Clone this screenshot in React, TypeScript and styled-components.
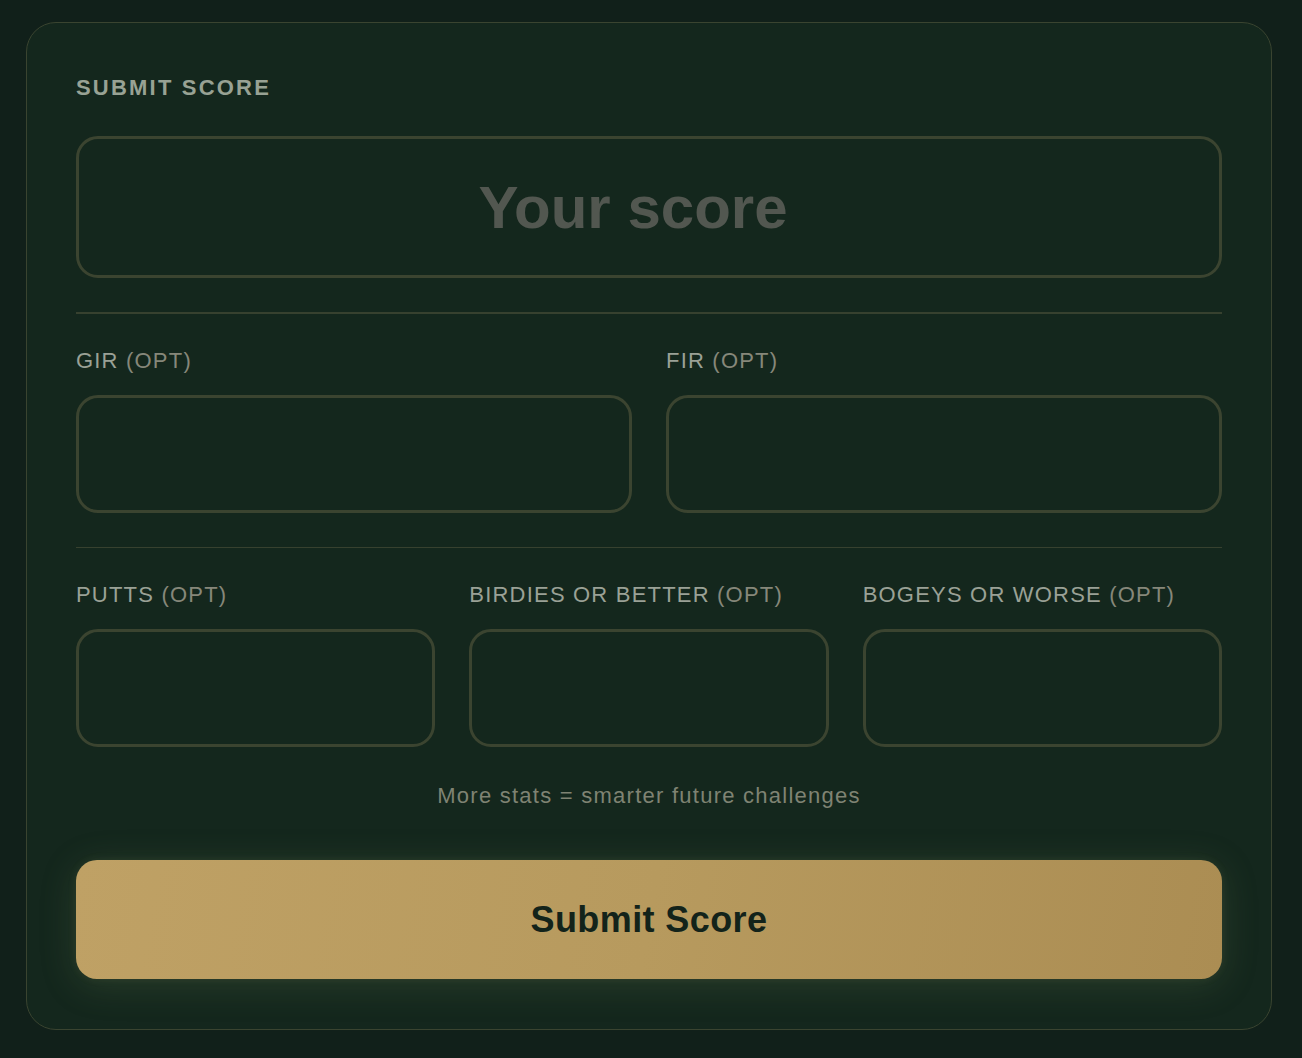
import styled, { createGlobalStyle } from 'styled-components';

const GlobalStyle = createGlobalStyle`
  html, body {
    margin: 0;
    padding: 0;
    background: #11201a;
  }
  body {
    font-family: "Liberation Sans", Arial, sans-serif;
    min-height: 1058px;
  }
  * { box-sizing: border-box; }
`;

const Page = styled.div`
  padding: 22px 30px 29px 26px;
`;

const Card = styled.form`
  display: flex;
  flex-direction: column;
  background: #14271d;
  border: 1.5px solid #3a4430;
  border-radius: 30px;
  padding: 52px 49px 50px 49px;
`;

const Title = styled.h2`
  margin: 0 0 36px;
  font-size: 22px;
  line-height: 25px;
  font-weight: 700;
  letter-spacing: 2.2px;
  color: #98a294;
  text-transform: uppercase;
`;

const Input = styled.input<{ $big?: boolean }>`
  display: block;
  width: 100%;
  height: ${p => (p.$big ? 142 : 118)}px;
  background: transparent;
  border: 3px solid #3b4430;
  border-radius: 22px;
  outline: none;
  font-family: inherit;
  color: #d8dccf;
  text-align: center;
  padding: 0 ${p => (p.$big ? 32 : 0)}px 0 0;
  font-size: ${p => (p.$big ? 60 : 28)}px;
  font-weight: 700;

  &::placeholder {
    color: #525750;
  }
`;

const Divider = styled.hr`
  border: none;
  height: 1.5px;
  background: #37412f;
  margin: 34px 0 34px;
`;

const Row = styled.div<{ $cols: number }>`
  display: grid;
  grid-template-columns: repeat(${p => p.$cols}, 1fr);
  column-gap: 34px;
`;

const Field = styled.label`
  display: flex;
  flex-direction: column;
  gap: 21px;
`;

const Label = styled.span`
  font-size: 22px;
  line-height: 26px;
  letter-spacing: 1.2px;
  color: #9aa196;
  text-transform: uppercase;
  white-space: nowrap;
`;

const Opt = styled.span`
  color: #86877a;
`;

const Hint = styled.p`
  margin: 36px 0 51px;
  text-align: center;
  font-size: 22px;
  line-height: 26px;
  letter-spacing: 1.25px;
  color: #7f8373;
`;

const SubmitButton = styled.button`
  height: 119px;
  width: 100%;
  border: none;
  border-radius: 21px;
  background: linear-gradient(100deg, #bfa165 0%, #b79a5e 50%, #ab8d53 100%);
  box-shadow: 0 0 8px rgba(150, 150, 90, 0.12), 0 6px 36px rgba(120, 140, 90, 0.22);
  color: #13231a;
  font-family: inherit;
  font-size: 36px;
  font-weight: 700;
  letter-spacing: 0.4px;
  cursor: pointer;
`;

const optional = [
  ['GIR', 'FIR'],
  ['Putts', 'Birdies or better', 'Bogeys or worse'],
];

const App = () => {
  return (
    <>
      <GlobalStyle />
      <Page>
        <Card onSubmit={e => e.preventDefault()}>
          <Title>Submit Score</Title>
          <Input $big type="text" placeholder="Your score" />
          {optional.map(row => (
            <div key={row.join()}>
              <Divider />
              <Row $cols={row.length}>
                {row.map(name => (
                  <Field key={name}>
                    <Label>
                      {name} <Opt>(opt)</Opt>
                    </Label>
                    <Input type="text" />
                  </Field>
                ))}
              </Row>
            </div>
          ))}
          <Hint>More stats = smarter future challenges</Hint>
          <SubmitButton type="submit">Submit Score</SubmitButton>
        </Card>
      </Page>
    </>
  );
};

export default App;
